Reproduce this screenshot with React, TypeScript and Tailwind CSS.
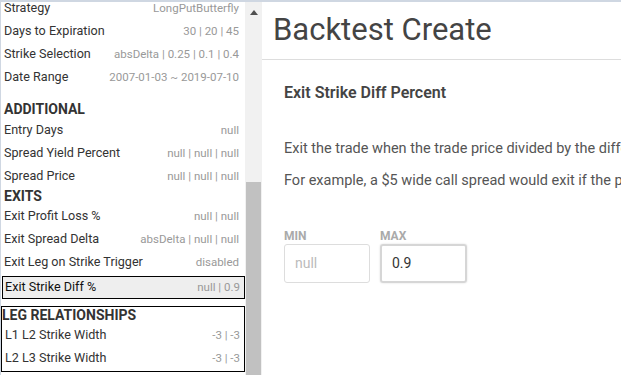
import React from "react";

type Row = { label: string; value: string };

const general: Row[] = [
  { label: "Strategy", value: "LongPutButterfly" },
  { label: "Days to Expiration", value: "30 | 20 | 45" },
  { label: "Strike Selection", value: "absDelta | 0.25 | 0.1 | 0.4" },
  { label: "Date Range", value: "2007-01-03 ~ 2019-07-10" },
];

const additional: Row[] = [
  { label: "Entry Days", value: "null" },
  { label: "Spread Yield Percent", value: "null | null | null" },
  { label: "Spread Price", value: "null | null | null" },
];

const exits: Row[] = [
  { label: "Exit Profit Loss %", value: "null | null" },
  { label: "Exit Spread Delta", value: "absDelta | null | null" },
  { label: "Exit Leg on Strike Trigger", value: "disabled" },
];

const legs: Row[] = [
  { label: "L1 L2 Strike Width", value: "-3 | -3" },
  { label: "L2 L3 Strike Width", value: "-3 | -3" },
];

function SideRow({ label, value }: Row) {
  return (
    <div className="flex h-[23px] items-center justify-between pl-[3px] pr-[6px]">
      <span className="text-[12.6px] text-[#333]">{label}</span>
      <span className="text-[11.5px] text-[#999]">{value}</span>
    </div>
  );
}

function Heading({ children }: { children: React.ReactNode }) {
  return <h3 className="pl-[3px] text-[14px] font-bold uppercase text-[#333]">{children}</h3>;
}

export default function App() {
  return (
    <div
      className="flex h-[375px] w-[621px] overflow-hidden border-t-2 border-[#cfd7e2] bg-white"
      style={{ fontFamily: "Roboto, 'Liberation Sans', sans-serif" }}
    >
      {/* sidebar */}
      <aside className="w-[245px] shrink-0 overflow-hidden border-l border-[#cfd7e2]">
        <div className="-mt-[5px]">
          {general.map((r) => (
            <SideRow key={r.label} {...r} />
          ))}

          <div className="mt-[10px] flex h-[20px] items-center">
            <Heading>Additional</Heading>
          </div>
          {additional.map((r) => (
            <SideRow key={r.label} {...r} />
          ))}

          <div className="flex h-[17px] items-center">
            <Heading>Exits</Heading>
          </div>
          {exits.map((r) => (
            <SideRow key={r.label} {...r} />
          ))}

          <div className="mt-[2px] ml-[1px] flex h-[23px] items-center justify-between border border-black bg-[#eee] pl-[2px] pr-[4px]">
            <span className="text-[12.6px] text-[#111]">Exit Strike Diff %</span>
            <span className="text-[11.5px] text-[#999]">null | 0.9</span>
          </div>

          <div className="mt-[7px] border border-black pb-[1px]">
            <div className="flex h-[17px] items-center">
              <h3 className="text-[14px] font-bold uppercase text-[#333]">Leg Relationships</h3>
            </div>
            {legs.map((r) => (
              <div key={r.label} className="flex h-[23px] items-center justify-between pl-[3px] pr-[4px]">
                <span className="text-[12.6px] text-[#333]">{r.label}</span>
                <span className="text-[11.5px] text-[#999]">{r.value}</span>
              </div>
            ))}
          </div>
        </div>
      </aside>

      {/* scrollbar */}
      <div className="flex w-[17px] shrink-0 flex-col bg-[#f1f1f1]">
        <div className="flex h-[20px] items-center justify-center">
          <svg width="8" height="5" viewBox="0 0 8 5">
            <path d="M0 5 L4 0 L8 5 Z" fill="#505050" />
          </svg>
        </div>
        <div className="mt-[160px] mx-[1px] flex-1 bg-[#c1c1c1]" />
      </div>

      {/* main */}
      <main className="flex-1 overflow-hidden">
        <div className="flex h-[58px] items-center border-b border-[#ddd] pl-[11px]">
          <h1 className="whitespace-nowrap text-[31px] text-[#444]">Backtest Create</h1>
        </div>
        <div className="pl-[22px]">
          <h2 className="mt-[21px] whitespace-nowrap text-[16px] font-semibold text-[#444]">
            Exit Strike Diff Percent
          </h2>
          <p className="mt-[33px] whitespace-nowrap text-[14.5px] text-[#555]">
            Exit the trade when the trade price divided by the difference in strikes is within the range.
          </p>
          <p className="mt-[10px] whitespace-nowrap text-[14.5px] text-[#555]">
            For example, a $5 wide call spread would exit if the price reaches $4.50 with a max of 0.9.
          </p>
          <div className="mt-[37px] flex gap-[10px]">
            <div className="flex flex-col">
              <label className="text-[12px] font-bold uppercase leading-[14px] text-[#aaa]">Min</label>
              <input
                className="mt-[1px] h-[39px] w-[86px] rounded-[3px] border border-[#ddd] px-[10px] text-[14px] text-[#333] outline-none placeholder:text-[#bbb]"
                placeholder="null"
              />
            </div>
            <div className="flex flex-col">
              <label className="text-[12px] font-bold uppercase leading-[14px] text-[#aaa]">Max</label>
              <input
                className="mt-[1px] h-[39px] w-[87px] rounded-[3px] border-2 border-[#d6d6d6] px-[10px] text-[14px] text-[#333] shadow-[0_0_2px_rgba(0,0,0,0.15)] outline-none"
                defaultValue="0.9"
              />
            </div>
          </div>
        </div>
      </main>
    </div>
  );
}
